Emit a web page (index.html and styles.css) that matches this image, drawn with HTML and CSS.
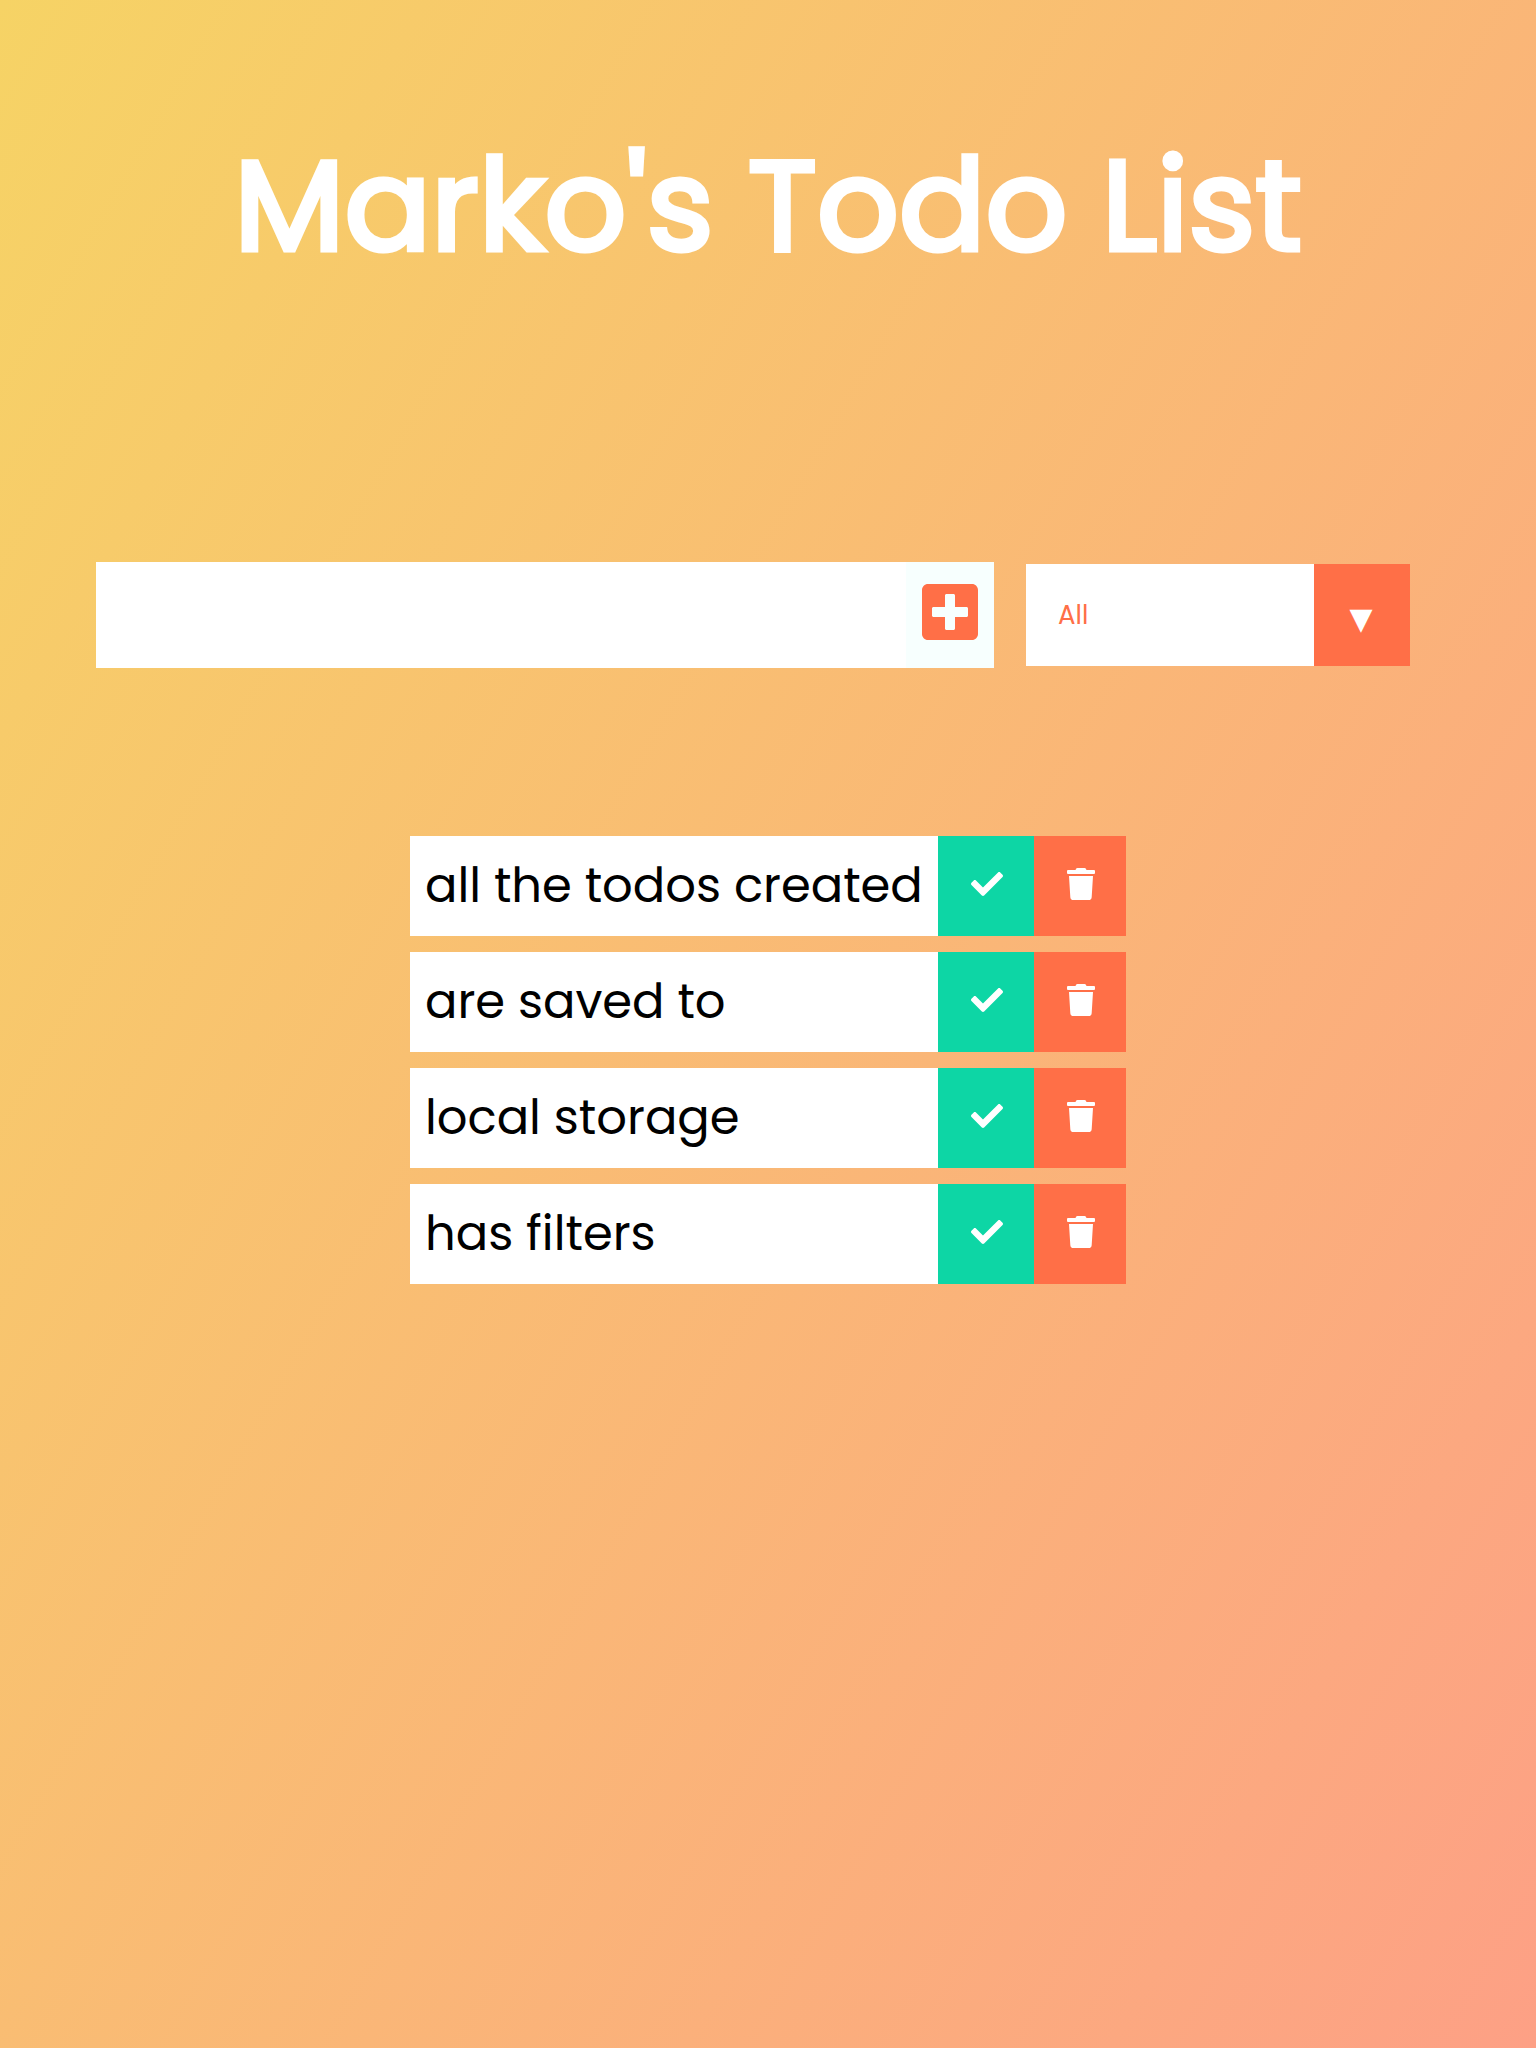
FILE: index.html
```html
<!DOCTYPE html>
<html lang="en">
<head>
  <meta charset="utf-8">
  <meta name="viewport" content="width=device-width, initial-scale=1">
  <title>Marko's Todo List</title>
  <link rel="stylesheet" href="styles.css">
</head>
<body>
  <svg class="sprite" aria-hidden="true">
    <symbol id="check" viewBox="0 0 512 512"><path d="M173.898 439.404l-166.4-166.4c-9.997-9.997-9.997-26.206 0-36.204l36.203-36.204c9.997-9.998 26.207-9.998 36.204 0L192 312.69 432.095 72.596c9.997-9.997 26.207-9.997 36.204 0l36.203 36.204c9.997 9.997 9.997 26.206 0 36.204l-294.4 294.401c-9.998 9.997-26.207 9.997-36.204-.001z"/></symbol>
    <symbol id="trash" viewBox="0 0 448 512"><path d="M432 32H312l-9.4-18.7A24 24 0 0 0 281.1 0H166.8a23.72 23.72 0 0 0-21.4 13.3L136 32H16A16 16 0 0 0 0 48v32a16 16 0 0 0 16 16h416a16 16 0 0 0 16-16V48a16 16 0 0 0-16-16zM53.2 467a48 48 0 0 0 47.9 45h245.8a48 48 0 0 0 47.9-45L416 128H32z"/></symbol>
  </svg>

  <header class="header">
    <h1 class="title">Marko's Todo List</h1>
  </header>

  <form class="todo-form">
    <div class="entry">
      <input class="todo-input" type="text" aria-label="New todo">
      <button class="add-button" type="submit" aria-label="Add todo">
        <svg class="plus-icon" viewBox="0 0 448 512" aria-hidden="true"><path d="M400 32H48C21.5 32 0 53.5 0 80v352c0 26.5 21.5 48 48 48h352c26.5 0 48-21.5 48-48V80c0-26.5-21.5-48-48-48zm-32 252c0 6.6-5.4 12-12 12h-92v92c0 6.6-5.4 12-12 12h-56c-6.6 0-12-5.4-12-12v-92H92c-6.6 0-12-5.4-12-12v-56c0-6.6 5.4-12 12-12h92v-92c0-6.6 5.4-12 12-12h56c6.6 0 12 5.4 12 12v92h92c6.6 0 12 5.4 12 12v56z"/></svg>
      </button>
    </div>
    <div class="filter">
      <select class="filter-select" aria-label="Filter todos">
        <option>All</option>
        <option>Completed</option>
        <option>Uncompleted</option>
      </select>
      <span class="filter-arrow" aria-hidden="true">▼</span>
    </div>
  </form>

  <main class="todo-container">
    <ul class="todo-list">
      <li class="todo">
        <span class="todo-text">all the todos created</span>
        <button class="complete-button" type="button" aria-label="Complete"><svg class="check-icon"><use href="#check"/></svg></button>
        <button class="trash-button" type="button" aria-label="Delete"><svg class="trash-icon"><use href="#trash"/></svg></button>
      </li>
      <li class="todo">
        <span class="todo-text">are saved to</span>
        <button class="complete-button" type="button" aria-label="Complete"><svg class="check-icon"><use href="#check"/></svg></button>
        <button class="trash-button" type="button" aria-label="Delete"><svg class="trash-icon"><use href="#trash"/></svg></button>
      </li>
      <li class="todo">
        <span class="todo-text">local storage</span>
        <button class="complete-button" type="button" aria-label="Complete"><svg class="check-icon"><use href="#check"/></svg></button>
        <button class="trash-button" type="button" aria-label="Delete"><svg class="trash-icon"><use href="#trash"/></svg></button>
      </li>
      <li class="todo">
        <span class="todo-text">has filters</span>
        <button class="complete-button" type="button" aria-label="Complete"><svg class="check-icon"><use href="#check"/></svg></button>
        <button class="trash-button" type="button" aria-label="Delete"><svg class="trash-icon"><use href="#trash"/></svg></button>
      </li>
    </ul>
  </main>
</body>
</html>
```
FILE: styles.css
```css
* {
  box-sizing: border-box;
  margin: 0;
  padding: 0;
}

body {
  min-height: 100vh;
  background: linear-gradient(120deg, #f6d365, #fda085);
  color: #fff;
  font-family: Poppins, Inter, "Liberation Sans", sans-serif;
  font-feature-settings: "cv11";
}

button,
input,
select {
  border: none;
  border-radius: 0;
  outline: none;
  font: inherit;
  font-feature-settings: inherit;
}

button,
select {
  cursor: pointer;
}

svg {
  display: block;
  fill: currentColor;
}

.sprite {
  display: none;
}

.header {
  padding: 112px 32px 0;
  text-align: center;
}

.title {
  font-size: 128px;
  font-weight: 400;
  line-height: 188px;
  -webkit-text-stroke: 5px #fff;
}

.todo-form {
  display: flex;
  align-items: center;
  gap: 32px;
  padding: 262px 126px 0 96px;
}

.entry {
  display: flex;
  flex: 1;
  min-width: 0;
  height: 106px;
}

.todo-input {
  flex: 1;
  min-width: 0;
  padding: 16px;
  background: #fff;
  color: #000;
  font-size: 48px;
}

.add-button {
  display: flex;
  flex: none;
  justify-content: center;
  width: 88px;
  padding-top: 18px;
  background: #f7fffe;
  color: #ff6f47;
}

.plus-icon {
  width: 56px;
  height: 64px;
}

.filter {
  position: relative;
  flex: 0 0 384px;
  height: 102px;
}

.filter-select {
  width: 100%;
  height: 100%;
  padding: 0 128px 0 32px;
  appearance: none;
  background: #fff;
  color: #ff6f47;
  font-size: 26px;
}

.filter-arrow {
  position: absolute;
  inset: 0 0 0 auto;
  width: 96px;
  padding: 4px 2px 0 0;
  background: #ff6f47;
  font-family: "DejaVu Sans", sans-serif;
  font-size: 30px;
  line-height: 102px;
  text-align: center;
  pointer-events: none;
}

.todo-container {
  display: flex;
  justify-content: center;
  padding: 168px 16px 64px;
}

.todo-list {
  display: grid;
  flex: 0 1 716px;
  gap: 16px;
  list-style: none;
}

.todo {
  display: flex;
  height: 100px;
  background: #fff;
  color: #000;
}

.todo-text {
  flex: 1;
  min-width: 0;
  padding-left: 15px;
  font-size: 48px;
  line-height: 100px;
  white-space: nowrap;
}

.complete-button,
.trash-button {
  display: flex;
  align-items: center;
  justify-content: center;
  padding: 0 0 4px 2px;
  color: #fff;
}

.complete-button {
  width: 96px;
  background: #0dd6a5;
}

.trash-button {
  width: 92px;
  background: #ff6f47;
}

.check-icon {
  width: 32px;
  height: 32px;
}

.trash-icon {
  width: 28px;
  height: 32px;
}
```
